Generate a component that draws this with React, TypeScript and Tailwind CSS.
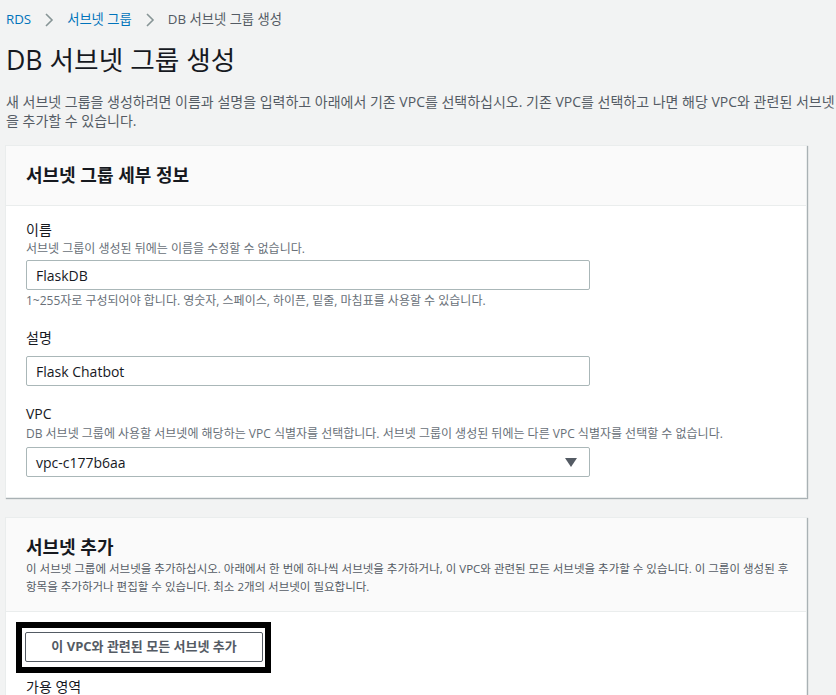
import React from "react";

const font = { fontFamily: '"Open Sans", "Noto Sans CJK KR", sans-serif' };

function Chevron() {
  return (
    <svg width="10" height="14" viewBox="0 0 10 14" className="mx-[9px]">
      <path d="M2 1 L8 7 L2 13" fill="none" stroke="#879596" strokeWidth="1.6" />
    </svg>
  );
}

export default function App() {
  return (
    <div className="min-h-[695px] w-[836px] bg-[#f2f3f3] text-[#16191f] overflow-hidden" style={font}>
      <div className="pl-[6px]">
        <div className="flex items-center h-[40px] text-[13.3px]">
          <span className="text-[#0073bb]">RDS</span>
          <span className="mx-[4px] flex items-center"><Chevron /></span>
          <span className="text-[#0073bb]">서브넷 그룹</span>
          <span className="mx-[4px] flex items-center"><Chevron /></span>
          <span className="text-[#545b64]">DB 서브넷 그룹 생성</span>
        </div>
        <h1 className="text-[26.7px] leading-[40px] font-normal text-[#16191f]">DB 서브넷 그룹 생성</h1>
        <p className="w-[834px] text-[14px] leading-[19px] text-[#545b64] mt-[12px]">
          새 서브넷 그룹을 생성하려면 이름과 설명을 입력하고 아래에서 기존 VPC를 선택하십시오. 기존 VPC를 선택하고 나면 해당 VPC와 관련된 서브넷을 추가할 수 있습니다.
        </p>

        <div className="mt-[15px] w-[802px] -ml-[1px] bg-white border border-[#eaeded] shadow-[1px_1px_1px_0_rgba(0,28,36,0.3)]">
          <div className="h-[60px] bg-[#fafafa] border-b border-[#eaeded] flex items-center px-[20px]">
            <h2 className="text-[18px] font-bold">서브넷 그룹 세부 정보</h2>
          </div>
          <div className="px-[20px] pt-[14px] pb-[20px]">
            <div className="text-[14px] leading-[20px]">이름</div>
            <div className="mt-[1px] text-[12px] leading-[16px] text-[#687078]">서브넷 그룹이 생성된 뒤에는 이름을 수정할 수 없습니다.</div>
            <div className="mt-[3px] w-[564px] h-[30px] border border-[#aab7b8] rounded-[2px] flex items-center px-[9px] text-[14px]">FlaskDB</div>
            <div className="mt-[3px] text-[12px] leading-[16px] text-[#687078]">1~255자로 구성되어야 합니다. 영숫자, 스페이스, 하이픈, 밑줄, 마침표를 사용할 수 있습니다.</div>

            <div className="mt-[19px] text-[14px] leading-[20px]">설명</div>
            <div className="mt-[8px] w-[564px] h-[30px] border border-[#aab7b8] rounded-[2px] flex items-center px-[9px] text-[14px]">Flask Chatbot</div>

            <div className="mt-[18px] text-[14px] leading-[20px]">VPC</div>
            <div className="mt-[2px] text-[12px] leading-[16px] text-[#687078]">DB 서브넷 그룹에 사용할 서브넷에 해당하는 VPC 식별자를 선택합니다. 서브넷 그룹이 생성된 뒤에는 다른 VPC 식별자를 선택할 수 없습니다.</div>
            <div className="mt-[5px] w-[564px] h-[30px] border border-[#aab7b8] rounded-[2px] flex items-center justify-between pl-[9px] pr-[12px] text-[14px]">
              <span>vpc-c177b6aa</span>
              <svg width="12" height="9" viewBox="0 0 12 9"><path d="M0 0 H12 L6 9 Z" fill="#545b64" /></svg>
            </div>
          </div>
        </div>

        <div className="mt-[19px] w-[802px] -ml-[1px] bg-white border border-[#eaeded] shadow-[1px_1px_1px_0_rgba(0,28,36,0.3)]">
          <div className="bg-[#fafafa] border-b border-[#eaeded] px-[20px] pt-[16px] pb-[15px]">
            <h2 className="text-[18px] font-bold leading-[26px]">서브넷 추가</h2>
            <p className="w-[766px] text-[11.5px] leading-[18px] text-[#545b64]">
              이 서브넷 그룹에 서브넷을 추가하십시오. 아래에서 한 번에 하나씩 서브넷을 추가하거나, 이 VPC와 관련된 모든 서브넷을 추가할 수 있습니다. 이 그룹이 생성된 후 항목을 추가하거나 편집할 수 있습니다. 최소 2개의 서브넷이 필요합니다.
            </p>
          </div>
          <div className="pl-[10px] pt-[10px]">
            <div className="inline-block border-[6px] border-black pl-[3px] pr-[2px] pt-[4px] pb-[5px]">
              <button className="w-[238px] h-[30px] border border-[#545b64] rounded-[2px] bg-white text-[13px] font-bold text-[#545b64] flex items-center justify-center" style={font}>
                이 VPC와 관련된 모든 서브넷 추가
              </button>
            </div>
            <div className="pl-[10px] mt-[4px] text-[14px] leading-[20px]">가용 영역</div>
          </div>
        </div>
      </div>
    </div>
  );
}
